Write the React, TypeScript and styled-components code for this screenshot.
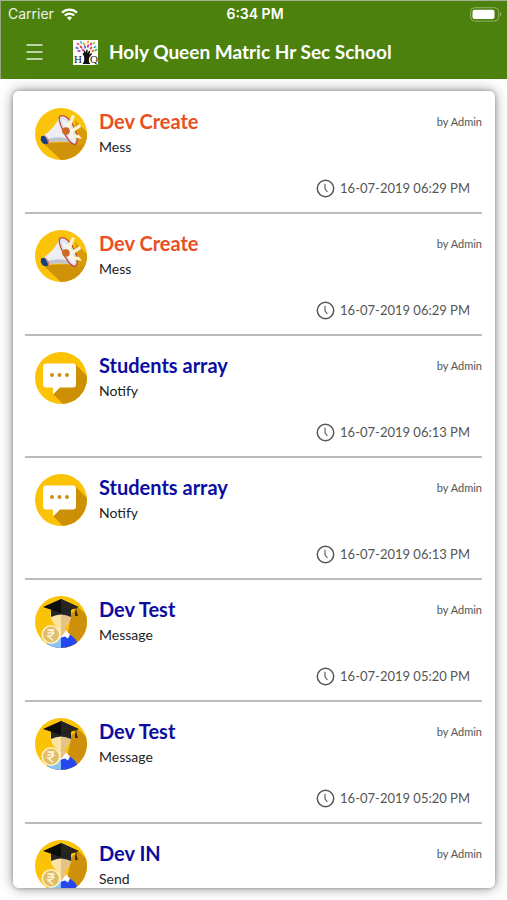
import React from "react";
import styled, { createGlobalStyle } from "styled-components";

const GlobalStyle = createGlobalStyle`
  * { box-sizing: border-box; }
  body { margin: 0; background: #fff; font-family: "Lato", "Liberation Sans", sans-serif; }
`;

const Screen = styled.div`
  display: flex;
  flex-direction: column;
  height: 100vh;
`;

const TopBar = styled.header`
  flex: none;
  background: #4c810e;
  color: #fff;
  border-top: 1px solid #a5b193;
  border-left: 1px solid #93a77b;
`;

const StatusBar = styled.div`
  display: grid;
  grid-template-columns: 1fr auto 1fr;
  align-items: center;
  height: 26px;
  padding: 0 5px 0 7px;
  font-family: "Inter", sans-serif;
  line-height: 16px;
`;

const Carrier = styled.div`
  display: flex;
  align-items: center;
  gap: 7px;
  color: #edf3e7;
  font-size: 14px;
`;

const StatusTime = styled.time`
  font-size: 14px;
  font-weight: 600;
`;

const BatterySlot = styled.div`
  display: flex;
  justify-content: flex-end;
`;

const Toolbar = styled.div`
  display: flex;
  align-items: center;
  height: 52px;
  padding: 0 25px 2px;
`;

const MenuButton = styled.button`
  display: flex;
  margin: 0 30px 0 0;
  padding: 0;
  border: 0;
  background: none;
  color: #e4eeda;
  cursor: pointer;
`;

const SchoolName = styled.h1`
  margin: 0 0 0 11px;
  font-size: 19px;
  line-height: 24px;
  font-weight: 700;
  white-space: nowrap;
`;

const Content = styled.main`
  flex: 1;
  min-height: 0;
  display: flex;
  padding: 12px 12px 12px 13px;
`;

const Card = styled.ul`
  flex: 1;
  margin: 0;
  padding: 1px 13px 0 12px;
  list-style: none;
  background: #fff;
  border-radius: 6px;
  box-shadow: 0 0 14px rgba(0, 0, 0, 0.4), 0 0 4px rgba(0, 0, 0, 0.3);
  overflow-y: auto;
  scrollbar-width: none;
`;

const Notice = styled.li`
  display: flex;
  flex-direction: column;
  justify-content: space-between;
  height: 122px;
  padding: 16px 0 14px;
  border-bottom: 2px solid #bcbcbc;
`;

const Summary = styled.div`
  display: flex;
  align-items: flex-start;
  padding-left: 10px;
`;

const Texts = styled.div`
  flex: 1;
  padding: 1px 0 0 12px;
`;

const Title = styled.h2<{ $tone: string }>`
  margin: 0;
  color: ${(p) => p.$tone};
  font-size: 20px;
  line-height: 24px;
  font-weight: 700;
`;

const Detail = styled.p`
  margin: 4px 0 0;
  color: #222;
  font-size: 14px;
  line-height: 20px;
`;

const Author = styled.span`
  padding-top: 6px;
  color: #555;
  font-size: 11px;
  line-height: 16px;
`;

const Posted = styled.div`
  display: flex;
  justify-content: flex-end;
  align-items: center;
  gap: 5px;
  padding-right: 12px;
  color: #555;
  font-size: 13px;
  line-height: 20px;
`;

const WifiIcon = () => (
  <svg width="17" height="13" viewBox="0 0 17 13" fill="none" stroke="#fff" strokeWidth="2.2" aria-hidden="true">
    <path d="M1 4.6a10.7 10.7 0 0 1 15 0" />
    <path d="M3.8 7.5a6.7 6.7 0 0 1 9.4 0" />
    <path d="M6 9.8a3.6 3.6 0 0 1 5 0L8.500 12.400Z" fill="#fff" stroke="none" />
  </svg>
);

const BatteryIcon = () => (
  <svg width="32" height="15" viewBox="0 0 32 15" aria-label="Battery">
    <rect x="0.700" y="0.700" width="28" height="13.400" rx="4" fill="none" stroke="#8fb067" />
    <rect x="2.500" y="2.700" width="22" height="9.400" rx="2" fill="#fff" />
    <path d="M30 5.200q2.600 2.200 0 4.400z" fill="#9dba7c" />
  </svg>
);

const MenuIcon = () => (
  <svg width="17" height="16" viewBox="0 0 17 16" stroke="currentColor" strokeWidth="1.300" aria-hidden="true">
    <path d="M0.500 1h16M0.500 8h16M0.500 15h16" />
  </svg>
);

const leaves: [number, number, string, number][] = [
  [5, 4, "#e84c88", 30], [8, 2.500, "#5bc0de", 70], [11, 4, "#f29b20", 45], [15, 2, "#f5b52c", 100],
  [18, 4, "#e63f65", 130], [21, 3, "#9bd34a", 120], [22, 7, "#2dabc8", 150], [18, 8, "#ef5a28", 130],
  [8, 7, "#ea3f35", 40], [4, 8, "#6264d6", 25], [6, 11, "#b63fb5", 10], [12, 7, "#4579dc", 80],
  [15, 6, "#d72f80", 100], [20, 11, "#ee7b23", 160], [23, 10, "#49b75d", 150], [10, 10, "#eb478f", 50],
];

const Logo = () => (
  <svg width="25" height="25" viewBox="0 0 25 25" role="img" aria-label="School logo">
    <rect width="25" height="25" fill="#fff" />
    {leaves.map(([x, y, fill, turn]) => (
      <ellipse key={`${x}-${y}`} cx={x} cy={y} rx="1.700" ry="1" fill={fill} transform={`rotate(${turn} ${x} ${y})`} />
    ))}
    <path d="M9.500 24c1.800-1.500 2-4.500 1.500-7.500-.2-1.500-1.800-2.200-1.200-3.500l1 .2.200-2.700 1.200.2.500 2.400.8-3.600 1.200.2-.2 3.600 1.700-2.900 1 .6-.8 3.500 2-1.500.6 1-2.600 3.200c-1 2.500-.7 5.200 1.100 6.800z" fill="#111" />
    <g fontFamily="Liberation Serif" fontSize="11" fill="#222">
      <text x="1" y="23">H</text>
      <text x="17" y="23">Q</text>
    </g>
  </svg>
);

const ClockIcon = () => (
  <svg width="19" height="19" viewBox="0 0 19 19" fill="none" stroke="#555" aria-hidden="true">
    <circle cx="9.500" cy="9.500" r="8.200" strokeWidth="1.500" />
    <path d="M9 4.800v5l2.400 3.200" strokeWidth="1.100" />
  </svg>
);

const MegaphoneIcon = () => (
  <svg width="52" height="52" viewBox="0 0 52 52" aria-hidden="true">
    <clipPath id="megaphone-disc"><circle cx="26" cy="26" r="26" /></clipPath>
    <g clipPath="url(#megaphone-disc)">
      <rect width="52" height="52" fill="#fbc309" />
      <path d="m8 35 32-1 12-10v28H26z" fill="#cf9208" />
      <path d="M40 12 52 24v12l-10 1z" fill="#d89b0a" />
      <path d="M8 28Q20 20 25 8q12 8 16 28-14-5-30-1z" fill="#eceef2" />
      <path d="M10 32q15-6 28 1l3 3q-14-5-29-1z" fill="#bfc3cd" />
      <path d="M6 28.500q3-2 5 1t2 6q-3 2-6-1-2-3-1-6z" fill="#183e7c" />
      <path d="M9 27.500q5 2 4.500 8" fill="none" stroke="#d6685c" />
      <path d="M25 8c5-2 11 4 14.500 12 3.500 8 3.500 15 .5 16.500-4 0-9-7-12-14-3-6-5-12-3-14.500Z" fill="#dcdfe5" stroke="#c7443a" strokeWidth="1.300" />
      <path d="M27 11c5 1 9 7 11 13s2 9 1 10c-4-2-7-8-9-13-2-4-3-8-3-10Z" fill="#f1f3f6" />
      <circle cx="31" cy="23" r="3.800" fill="#cc6724" />
      <path d="m32 18 5-11 3 1-5 12zM35 22l10-6 1 3-9 6zM36 26l8 1 3 4-10-2z" fill="#fff4d4" />
    </g>
  </svg>
);

const ChatIcon = () => (
  <svg width="52" height="52" viewBox="0 0 52 52" aria-hidden="true">
    <clipPath id="chat-disc"><circle cx="26" cy="26" r="26" /></clipPath>
    <g clipPath="url(#chat-disc)">
      <rect width="52" height="52" fill="#fbc206" />
      <path d="m40 12 15 15v28H31L18 42z" fill="#cd9005" />
      <path d="M11 11.500h27q3 0 3 3v18q0 3-3 3H25l-7 7v-7h-7q-3 0-3-3v-18q0-3 3-3Z" fill="#fff" />
      <g fill="#cc9117">
        <circle cx="17" cy="23" r="2" /><circle cx="24.500" cy="23" r="2" /><circle cx="32" cy="23" r="2" />
      </g>
    </g>
  </svg>
);

const StudentIcon = () => (
  <svg width="52" height="52" viewBox="0 0 52 52" aria-hidden="true">
    <clipPath id="student-disc"><circle cx="26" cy="26" r="26" /></clipPath>
    <g clipPath="url(#student-disc)">
      <rect width="52" height="52" fill="#fbc307" />
      <path d="m36 18 7-7 11 10v32H30z" fill="#cf910b" />
      <path d="M12 52q0-13 10-15h10q10 4 12 15z" fill="#2547f0" />
      <path d="M12 52q0-13 10-15l4 4v11z" fill="#8cc5f4" />
      <path d="M15.500 17H36q1 8-6 14v6l-4 5-4-5v-6q-7-6-6.500-14z" fill="#fbe3a6" />
      <path d="M26 17h10q1 8-6 14v6l-4 5z" fill="#e5c384" />
      <path d="m21 36 5 5-4 5-4-6zM31 34.500l4 4-2 4-3-2-4 1z" fill="#fff" />
      <path d="M16 12h20v9q-10-5-20 0z" fill="#252525" />
      <path d="m8 11 18-8 17.500 8L26 17z" fill="#0c0c0c" />
      <path d="m26 3 17.500 8L26 17z" fill="#242424" />
      <path d="m27 10 14 2v5" fill="none" stroke="#3b2a0b" />
      <path d="m40 16 1.500-1 1.500 5h-3z" fill="#3b2a0b" />
      <circle cx="16" cy="38.500" r="8.700" fill="#e2bd68" stroke="#fff0bf" strokeWidth="1.600" />
      <path d="M12.500 34h7M12.500 37h7M13 34q5 0 5 3t-5 3l5 4.500" fill="none" stroke="#fff6da" strokeWidth="1.500" />
    </g>
  </svg>
);

const kinds = {
  announcement: { Icon: MegaphoneIcon, tone: "#e8501f" },
  chat: { Icon: ChatIcon, tone: "#0c0ca0" },
  student: { Icon: StudentIcon, tone: "#0c0ca0" },
};

const notices: { kind: keyof typeof kinds; title: string; detail: string; posted: string }[] = [
  { kind: "announcement", title: "Dev Create", detail: "Mess", posted: "16-07-2019 06:29 PM" },
  { kind: "announcement", title: "Dev Create", detail: "Mess", posted: "16-07-2019 06:29 PM" },
  { kind: "chat", title: "Students array", detail: "Notify", posted: "16-07-2019 06:13 PM" },
  { kind: "chat", title: "Students array", detail: "Notify", posted: "16-07-2019 06:13 PM" },
  { kind: "student", title: "Dev Test", detail: "Message", posted: "16-07-2019 05:20 PM" },
  { kind: "student", title: "Dev Test", detail: "Message", posted: "16-07-2019 05:20 PM" },
  { kind: "student", title: "Dev IN", detail: "Send", posted: "" },
];

export default function App() {
  return (
    <Screen>
      <GlobalStyle />
      <TopBar>
        <StatusBar>
          <Carrier>Carrier <WifiIcon /></Carrier>
          <StatusTime>6:34 PM</StatusTime>
          <BatterySlot><BatteryIcon /></BatterySlot>
        </StatusBar>
        <Toolbar>
          <MenuButton aria-label="Open menu"><MenuIcon /></MenuButton>
          <Logo />
          <SchoolName>Holy Queen Matric Hr Sec School</SchoolName>
        </Toolbar>
      </TopBar>
      <Content>
        <Card>
          {notices.map(({ kind, title, detail, posted }, index) => {
            const { Icon, tone } = kinds[kind];
            return (
              <Notice key={index}>
                <Summary>
                  <Icon />
                  <Texts>
                    <Title $tone={tone}>{title}</Title>
                    <Detail>{detail}</Detail>
                  </Texts>
                  <Author>by Admin</Author>
                </Summary>
                {posted && <Posted><ClockIcon /><time>{posted}</time></Posted>}
              </Notice>
            );
          })}
        </Card>
      </Content>
    </Screen>
  );
}
